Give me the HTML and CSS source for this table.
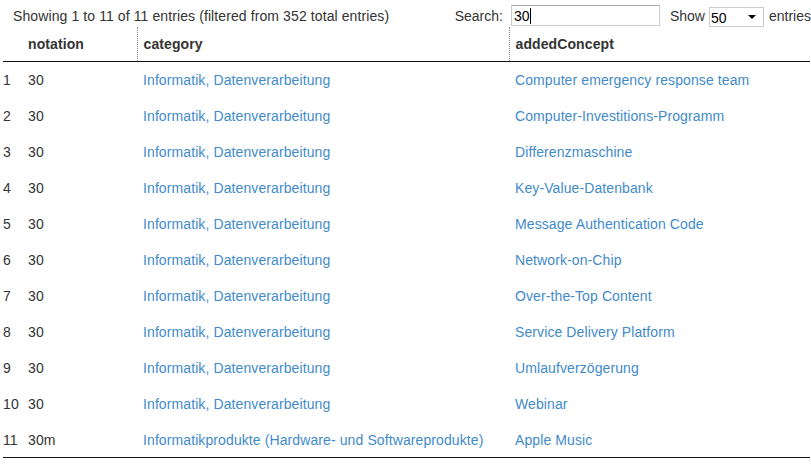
FILE: index.html
```html
<!DOCTYPE html>
<html>
<head>
<meta charset="utf-8">
<link rel="stylesheet" href="styles.css">
</head>
<body>
<div class="top">
  <div class="info">Showing 1 to 11 of 11 entries (filtered from 352 total entries)</div>
  <div class="controls">
    <span class="lbl">Search:</span>
    <div class="search"><span>30</span><span class="caret"></span></div>
    <span class="lbl show">Show</span>
    <div class="select"><span>50</span><span class="arrow"></span></div>
    <span class="lbl">entries</span>
  </div>
</div>
<table class="tbl">
  <thead>
    <tr>
      <th class="c1"></th>
      <th class="c2">notation</th>
      <th class="c3 dot">category</th>
      <th class="c4 dot">addedConcept</th>
    </tr>
  </thead>
  <tbody>
    <tr><td class="c1">1</td><td class="c2">30</td><td class="c3"><a>Informatik, Datenverarbeitung</a></td><td class="c4"><a>Computer emergency response team</a></td></tr>
    <tr><td class="c1">2</td><td class="c2">30</td><td class="c3"><a>Informatik, Datenverarbeitung</a></td><td class="c4"><a>Computer-Investitions-Programm</a></td></tr>
    <tr><td class="c1">3</td><td class="c2">30</td><td class="c3"><a>Informatik, Datenverarbeitung</a></td><td class="c4"><a>Differenzmaschine</a></td></tr>
    <tr><td class="c1">4</td><td class="c2">30</td><td class="c3"><a>Informatik, Datenverarbeitung</a></td><td class="c4"><a>Key-Value-Datenbank</a></td></tr>
    <tr><td class="c1">5</td><td class="c2">30</td><td class="c3"><a>Informatik, Datenverarbeitung</a></td><td class="c4"><a>Message Authentication Code</a></td></tr>
    <tr><td class="c1">6</td><td class="c2">30</td><td class="c3"><a>Informatik, Datenverarbeitung</a></td><td class="c4"><a>Network-on-Chip</a></td></tr>
    <tr><td class="c1">7</td><td class="c2">30</td><td class="c3"><a>Informatik, Datenverarbeitung</a></td><td class="c4"><a>Over-the-Top Content</a></td></tr>
    <tr><td class="c1">8</td><td class="c2">30</td><td class="c3"><a>Informatik, Datenverarbeitung</a></td><td class="c4"><a>Service Delivery Platform</a></td></tr>
    <tr><td class="c1">9</td><td class="c2">30</td><td class="c3"><a>Informatik, Datenverarbeitung</a></td><td class="c4"><a>Umlaufverzögerung</a></td></tr>
    <tr><td class="c1">10</td><td class="c2">30</td><td class="c3"><a>Informatik, Datenverarbeitung</a></td><td class="c4"><a>Webinar</a></td></tr>
    <tr><td class="c1">11</td><td class="c2">30m</td><td class="c3"><a>Informatikprodukte (Hardware- und Softwareprodukte)</a></td><td class="c4"><a>Apple Music</a></td></tr>
  </tbody>
</table>
</body>
</html>
```
FILE: styles.css
```css
html, body {
  margin: 0;
  padding: 0;
  background: #fff;
}
body {
  font-family: "Liberation Sans", Arial, sans-serif;
  font-size: 14px;
  letter-spacing: 0.1px;
  color: #333;
  width: 811px;
}
.top {
  display: flex;
  align-items: flex-start;
  height: 27px;
  padding-left: 13px;
}
.info {
  padding-top: 7px;
  line-height: 18px;
}
.controls {
  margin-left: auto;
  display: flex;
  align-items: flex-start;
  padding-right: 0;
  letter-spacing: 0;
}
.lbl {
  line-height: 18px;
  padding-top: 7px;
}
.show {
  margin-left: 10px;
}
.search {
  margin-left: 8px;
  margin-top: 5px;
  width: 145px;
  height: 19px;
  border: 1px solid #ccc;
  border-top-color: #a9a9a9;
  display: flex;
  align-items: center;
  padding-left: 2px;
  font-size: 14px;
  color: #000;
}
.caret {
  display: inline-block;
  width: 1px;
  height: 16px;
  background: #000;
}
.select {
  margin: 7px 5px 0 4px;
  width: 52px;
  height: 18px;
  border: 1px solid #ccc;
  display: flex;
  align-items: center;
  padding-left: 1px;
  color: #000;
}
.select span:first-child {
  padding-top: 2px;
}
.arrow {
  margin-left: auto;
  margin-right: 7px;
  width: 0;
  height: 0;
  border-left: 4px solid transparent;
  border-right: 4px solid transparent;
  border-top: 4px solid #000;
}
.tbl {
  margin-left: 3px;
  width: 807px;
  border-collapse: collapse;
  table-layout: fixed;
}
.tbl th, .tbl td {
  box-sizing: border-box;
}
.tbl th {
  height: 34px;
  text-align: left;
  font-weight: bold;
  color: #333;
  border-bottom: 1px solid #111;
  padding: 1px 0 0 0;
  vertical-align: middle;
}
.tbl td {
  height: 36px;
  padding: 2px 0 0 0;
  vertical-align: middle;
}
.tbl tbody tr:last-child td {
  border-bottom: 1px solid #111;
}
.tbl a {
  color: #428bca;
  text-decoration: none;
}
.tbl .c1 { width: 21px; padding-left: 0; }
.tbl .c2 { width: 113px; padding-left: 4px; }
.tbl .c3 { width: 372px; padding-left: 6px; }
.tbl .c4 { padding-left: 6px; }
.tbl th.dot {
  border-left: 1px dotted #888;
}
```
